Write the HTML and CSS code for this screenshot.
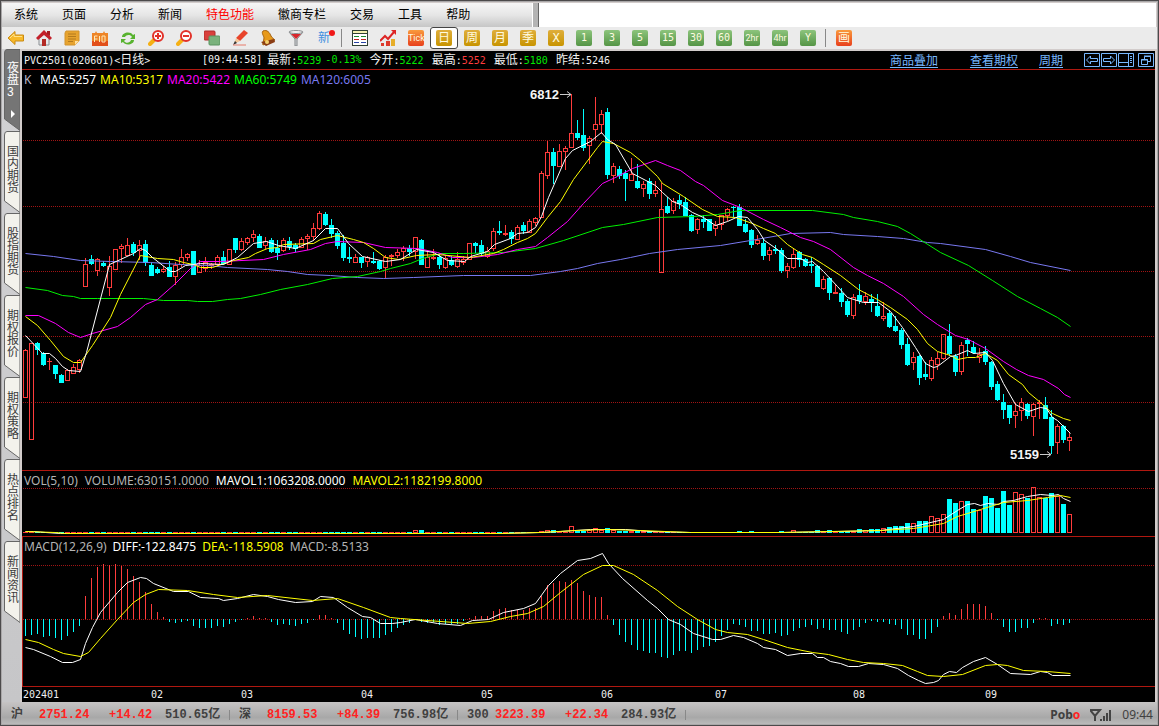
FILE: index.html
```html
<!DOCTYPE html>
<html lang="zh-CN">
<head>
<meta charset="utf-8">
<title>PVC2501 日线</title>
<link rel="stylesheet" href="styles.css">
</head>
<body>
<div class="window">
  <div class="menubar">
    <nav class="menu">
      <button>系统</button><button>页面</button><button>分析</button><button>新闻</button><button class="hot">特色功能</button><button>徽商专栏</button><button>交易</button><button>工具</button><button>帮助</button>
    </nav>
    <div class="menu-grip"></div>
    <div class="menu-blank"></div>
  </div>

  <div class="toolbar">
    <button aria-label="后退"><svg viewBox="0 0 16 16"><path d="M0 8 7 1.500V5h8.500v6H7v3.500z" fill="#f7b92a" stroke="#c98a12"/><path d="M2 8 6 4v2.500h8" fill="none" stroke="#ffe28a"/></svg></button>
    <button aria-label="首页"><svg viewBox="0 0 16 16"><path d="M3 8v7h10V8L8 4z" fill="#e8eaec" stroke="#8b8f93"/><path d="M0 8 8 0l8 8-2 2-6-5-6 5z" fill="#c3202a"/><path d="M11 1h3v5l-3-2z" fill="#a51c22"/><path d="M6 9h4v7H6z" fill="#b32a25"/></svg></button>
    <button aria-label="公告"><svg viewBox="0 0 16 16"><path d="M2 1h13v10l-4 4H1V3z" fill="#e7a32e" stroke="#d2932c"/><path d="M4 4h8M4 6.500h8M4 9h8M4 11.500h5" stroke="#b37a1e"/><path d="M15 11h-4v4z" fill="#ffe0a0"/></svg></button>
    <button aria-label="F10"><svg viewBox="0 0 16 16"><path d="M0 3h3l1-2 1 2h6l1-2 1 2h3v13H0z" fill="#ee8426"/><path d="M0 11h16v5H0z" fill="#e2501a"/><path d="M2.500 12V6h3M3 9h2.500M7.500 6v6M10 6h3v6h-3z" fill="none" stroke="#ffe9b8"/></svg></button>
    <button aria-label="刷新"><svg viewBox="0 0 16 16"><path d="M2 7c0-5 9-6 11-2l2-1v5h-5l2-2c-2-3-6-2-7 0zM14 10c0 5-9 6-11 2l-2 1V9h5l-2 2c2 3 6 2 7-1z" fill="#58b32f"/></svg></button>
    <button aria-label="放大"><svg viewBox="0 0 16 16"><path d="M6 10 2 14" stroke="#f5b014" stroke-width="4" stroke-linecap="round"/><circle cx="10" cy="6" r="5" fill="#fff" stroke="#e2322a" stroke-width="2"/><path d="M7 6h6M10 3v6" stroke="#e2322a" stroke-width="2"/></svg></button>
    <button aria-label="缩小"><svg viewBox="0 0 16 16"><path d="M6 10 2 14" stroke="#f5b014" stroke-width="4" stroke-linecap="round"/><circle cx="10" cy="6" r="5" fill="#fff" stroke="#e2322a" stroke-width="2"/><path d="M7 6h6" stroke="#e2322a" stroke-width="2"/></svg></button>
    <button aria-label="叠加"><svg viewBox="0 0 16 16"><rect x="0" y="1" width="11" height="9" rx="1" fill="#d9413c" stroke="#b02c2a"/><rect x="5" y="6" width="11" height="9" rx="1" fill="#7ab27c" stroke="#5a9460"/></svg></button>
    <button aria-label="画笔"><svg viewBox="0 0 16 16"><path d="m4 8 8-8 4 3-8 8z" fill="#e8442b"/><path d="m4 8 4 3-6 3z" fill="#f5c698"/><path d="m1 15 2-4 2 2z" fill="#333"/><path d="M1 15h13" stroke="#e77a6b"/></svg></button>
    <button aria-label="预警"><svg viewBox="0 0 16 16"><path d="M3 1C7-1 10 3 11 6c1 2 3 3 4 4L3 15c-1-2 1-4 1-7 0-2-3-5-1-7z" fill="#e79a1c" stroke="#a3600f"/><path d="M1 12 14 9l1 3-9 4z" fill="#8a3c14"/><circle cx="7" cy="12" r="2" fill="#f6d16d"/></svg></button>
    <button aria-label="筛选"><svg viewBox="0 0 16 16"><path d="M1 2h14L9 9v7H7V9z" fill="#d8dadc" stroke="#808487"/><path d="M3 4h10L8 9z" fill="#d8272d"/><ellipse cx="8" cy="2" rx="7" ry="1.500" fill="#f2f2f2" stroke="#8c8f92"/></svg></button>
    <button class="new-button">新<i class="badge"></i></button>
    <span class="separator"></span>
    <button aria-label="报价表"><svg viewBox="0 0 16 16" shape-rendering="crispEdges"><path d="M0 0h16v16H0z" fill="#2f4034"/><path d="M1 4h14v11H1z" fill="#fff"/><path d="M1 1h14v2H1z" fill="#f3efb0"/><path d="M2 6.500h5M9 6.500h5" stroke="#1a8a2a"/><path d="M2 9.500h5M9 9.500h5" stroke="#c32020"/><path d="M2 12.500h5M9 12.500h5" stroke="#2743a5"/></svg></button>
    <button aria-label="走势图"><svg viewBox="0 0 16 16"><path d="M1 13h3v3H1zM6 11h4v5H6z" fill="#dd3a2c"/><path d="M11 9h4v7h-4z" fill="#e7ae2a"/><path d="m0 11 5-5 3 3 6-7" fill="none" stroke="#dd2525" stroke-width="2"/><path d="M11 0h5v5z" fill="#dd2525"/></svg></button>
    <button><span class="tile orange small">Tick</span></button>
    <button class="selected"><span class="tile gold">日</span></button>
    <button><span class="tile gold">周</span></button>
    <button><span class="tile gold">月</span></button>
    <button><span class="tile gold">季</span></button>
    <button><span class="tile gold">X</span></button>
    <button><span class="tile green">1</span></button>
    <button><span class="tile green">3</span></button>
    <button><span class="tile green">5</span></button>
    <button><span class="tile green">15</span></button>
    <button><span class="tile green">30</span></button>
    <button><span class="tile green">60</span></button>
    <button><span class="tile green small">2hr</span></button>
    <button><span class="tile green small">4hr</span></button>
    <button><span class="tile green">Y</span></button>
    <span class="separator"></span>
    <button><span class="tile orange">画</span></button>
  </div>

  <main class="workspace">
    <aside class="tabs">
      <button class="tab active"><svg viewBox="0 0 16 82"><path d="M.5 70V4Q.5.500 3 .500H16V81.500z"/><path class="arrow" d="M7 61v8l4-4z"/></svg><span>夜盘<br>3</span></button>
      <button class="tab"><svg viewBox="0 0 16 82"><path d="M.5 70V4Q.5.500 3 .500H16V81.500z"/></svg><span>国内期货</span></button>
      <button class="tab"><svg viewBox="0 0 16 82"><path d="M.5 70V4Q.5.500 3 .500H16V81.500z"/></svg><span>股指期货</span></button>
      <button class="tab"><svg viewBox="0 0 16 82"><path d="M.5 70V4Q.5.500 3 .500H16V81.500z"/></svg><span>期权报价</span></button>
      <button class="tab"><svg viewBox="0 0 16 82"><path d="M.5 70V4Q.5.500 3 .500H16V81.500z"/></svg><span>期权策略</span></button>
      <button class="tab"><svg viewBox="0 0 16 82"><path d="M.5 70V4Q.5.500 3 .500H16V81.500z"/></svg><span>热点排名</span></button>
      <button class="tab"><svg viewBox="0 0 16 82"><path d="M.5 70V4Q.5.500 3 .500H16V81.500z"/></svg><span>新闻资讯</span></button>
    </aside>

    <section class="chart">
      <header class="quote">
        <h1>PVC2501(020601)&lt;<b>日线</b>&gt;</h1>
        <span class="clock">[09:44:58]</span>
        <span><b>最新</b>:<em class="down">5239</em></span>
        <em class="down change">-0.13%</em>
        <span><b>今开</b>:<em class="down">5222</em></span>
        <span><b>最高</b>:<em class="up">5252</em></span>
        <span><b>最低</b>:<em class="down">5180</em></span>
        <span><b>昨结</b>:5246</span>
        <nav class="links"><a href="#">商品叠加</a><a href="#">查看期权</a><a href="#">周期</a></nav>
        <div class="layout-buttons">
          <button aria-label="向左"><svg viewBox="0 0 16 14"><path d="M.5.500h15v13H.5zM2.500 7l4-4v2.500h7v3h-7V11z"/></svg></button>
          <button aria-label="向右"><svg viewBox="0 0 16 14"><path d="M.5.500h15v13H.5zM13.500 7l-4-4v2.500h-7v3h7V11z"/></svg></button>
          <button aria-label="侧栏"><svg viewBox="0 0 16 14"><path d="M.5.500h15v13H.5zM.5 9.500h10M10.500.500v13M12 3.500h2M12 5.500h2M12 7.500h2M12 9.500h2"/></svg></button>
          <button aria-label="还原" class="restore"><svg viewBox="0 0 16 14"><path d="M.5.500h15v13H.5zM6.500 6V3.500h6v5H10M6 3h7M3.500 6.500h6v5h-6zM3 7h7"/></svg></button>
        </div>
      </header>

      <div class="panel price">
        <p class="legend"><span class="k">K</span><span class="white">MA5:5257</span><span class="yellow">MA10:5317</span><span class="magenta">MA20:5422</span><span class="lime">MA60:5749</span><span class="violet">MA120:6005</span></p>
        <svg id="price"></svg>
      </div>
      <div class="panel volume">
        <p class="legend"><span class="grey">VOL(5,10)</span><span class="grey">VOLUME:630151.0000</span><span class="white">MAVOL1:1063208.0000</span><span class="yellow">MAVOL2:1182199.8000</span></p>
        <svg id="volume"></svg>
      </div>
      <div class="panel macd">
        <p class="legend"><span class="grey">MACD(12,26,9)</span><span class="white">DIFF:-122.8475</span><span class="yellow">DEA:-118.5908</span><span class="grey">MACD:-8.5133</span></p>
        <svg id="macd"></svg>
      </div>
      <div class="panel axis"><svg id="axis"></svg></div>
    </section>
  </main>

  <footer class="status">
    <div class="index"><span>沪</span><span class="up">2751.24</span><span class="up">+14.42</span><span>510.65亿</span></div>
    <div class="index"><span>深</span><span class="up">8159.53</span><span class="up">+84.39</span><span>756.98亿</span></div>
    <div class="index"><span>300</span><span class="up">3223.39</span><span class="up">+22.34</span><span>284.93亿</span></div>
    <strong class="brand">Pob<span class="up">o</span></strong>
    <svg class="signal" viewBox="0 0 22 12"><path d="M0 1h10L5 7zM5 5v7" fill="none" stroke="#444" stroke-width="2"/><path d="M10 10h2v2h-2zM13 7h2v5h-2zM16 4h2v8h-2zM19 1h2v11h-2z" fill="#444"/></svg>
    <time>09:44</time>
  </footer>
</div>
<script src="chart.js"></script>
</body>
</html>
```

FILE: styles.css
```css
* { box-sizing: border-box; }
body { margin: 0; background: #000; font: 12px/16px "Liberation Sans", "Noto Sans CJK SC", sans-serif; }
button { margin: 0; padding: 0; border: 0; background: none; color: inherit; font: inherit; }
b, em, i { font-weight: normal; font-style: normal; }
svg { display: block; }

.window {
  display: flex; flex-direction: column; min-height: 100vh;
  border: 1px solid #4c4a4b; box-shadow: inset 0 0 0 1px #a9a7a8;
  background: #d2cccb; padding: 2px 1px 1px;
}

.menubar { display: flex; height: 24px; padding-right: 1px; flex: none; }
.menu { display: flex; gap: 24px; width: 530px; padding: 0 12px; background: linear-gradient(#f6f6f6, #e6e6e6 50%, #c6c6c6); }
.menu button { color: #000; line-height: 24px; white-space: nowrap; }
.menu .hot { color: #f00; }
.menu-grip { width: 7px; background: #b4b4b4; border-left: 1px solid #fff; border-right: 1px solid #666; }
.menu-blank { flex: 1; background: #fff; }

.toolbar { display: flex; height: 22px; flex: none; background: #ebebeb; }
.toolbar button { display: grid; place-items: center; width: 28px; height: 22px; }
.toolbar svg { width: 16px; height: 16px; }
.toolbar .selected { background: #fff; border: 1px solid #444; border-radius: 3px; }
.separator { width: 8px; margin: 2px 0; background: linear-gradient(#888, #888) 3px 0 / 1px 100% no-repeat; }
.new-button { position: relative; color: #3f8fe0; }
.badge { position: absolute; top: 3px; right: 3px; width: 6px; height: 6px; border-radius: 50%; background: #f01818; }
.tile { display: block; width: 16px; height: 16px; border-radius: 2px; color: #fffbe0; font: 10px/16px "DejaVu Sans Mono", "Noto Sans CJK SC", monospace; text-align: center; white-space: nowrap; }
.tile.small { font: 9px/16px Roboto, sans-serif; }
.gold { background: linear-gradient(#dfae3c, #c89400); font-size: 12px; }
.green { background: linear-gradient(#8cc47c, #559546); }
.orange { background: linear-gradient(#f99a3c, #e8401c); font-size: 12px; }

.workspace { display: flex; flex: 1; padding-right: 2px; }
.tabs { width: 20px; padding-left: 2px; flex: none; background: linear-gradient(#d2d2d4, #c6c6c8); border-right: 2px solid #d2cccb; }
.tab { display: block; position: relative; width: 16px; height: 82px; padding: 15px 0 0 3px; color: #3c3c3c; text-align: left; vertical-align: top; }
.tab svg { position: absolute; top: 0; left: 0; width: 16px; height: 82px; fill: #f3f2ec; stroke: #666; }
.tab span { display: block; position: relative; width: 12px; font-size: 12px; line-height: 12px; word-break: break-all; height: 67px; }
.tab.active { color: #fff; padding-top: 10px; }
.tab.active svg { fill: #757575; }
.tab .arrow { fill: #fff; stroke: none; }

.chart { flex: 1; min-width: 0; display: flex; flex-direction: column; margin-top: 2px; background: #000; color: #f0f0f0; }
.quote { display: flex; align-items: center; gap: 8px; height: 19px; padding: 0 1px 0 2px; border-bottom: 1px solid #b01810; font: 10px/18px "DejaVu Sans Mono", monospace; white-space: nowrap; flex: none; }
.quote b { font: 12px/18px "Noto Sans CJK SC", sans-serif; }
.quote h1 { margin: 0; width: 170px; font: inherit; }
.quote .clock { margin-right: -3px; }
.quote .change { margin-left: -4px; }
.down { color: #00e800; }
.quote .up { color: #ff3c3c; }
.links { display: flex; margin-left: auto; font: 12px/16px "Noto Sans CJK SC", sans-serif; }
.links a { color: #78b8ff; margin-right: 32px; text-underline-offset: 2px; }
.links a:nth-child(2) { margin-right: 21px; }
.links a:last-child { margin-right: 13px; }
.layout-buttons { display: flex; gap: 1px; }
.layout-buttons svg { width: 16px; height: 14px; fill: none; stroke: #78b8ff; }
.layout-buttons .restore { margin-left: 3px; }

.panel { position: relative; border-bottom: 1px solid #b01810; }
.panel svg { width: 100%; height: 100%; }
.price { flex: 1; min-height: 401px; }
.price > svg { position: absolute; inset: 0; }
.volume { height: 66px; }
.macd { height: 150px; box-shadow: inset 1px 0 #b01810; }
.axis { height: 15px; border: 0; }
.legend { position: absolute; top: 2px; left: 2px; display: flex; gap: 4px; margin: 0; font: 12px/16px "Noto Sans", sans-serif; white-space: nowrap; }
.volume .legend { gap: 7px; }
.macd .legend { gap: 6px; }
.k { width: 12px; color: #b8b8c8; }
.grey { color: #b4b4b4; }
.white { color: #fff; }
.yellow { color: #ff0; }
.magenta { color: #f0f; }
.lime { color: #0f0; }
.violet { color: #7878f0; }

.chart line, .chart rect { shape-rendering: crispEdges; }
.grid-line { stroke: #a01414; stroke-dasharray: 1 1; }
.rise { fill: none; stroke: #ff3c3c; }
.rise-fill { fill: #ff3c3c; }
.fall-fill { fill: #0ff; }
.curve { fill: none; stroke-width: 1; }
.callout { fill: #f4f4f4; font: bold 13px "Liberation Sans", sans-serif; }
.pointer { fill: none; stroke: #ccc; }
.month { fill: #f0f0f0; font: 10px "DejaVu Sans Mono", monospace; }

.status { display: flex; align-items: center; height: 22px; flex: none; padding: 3px 4px 0 9px; background: linear-gradient(#c6c4c4, #a8a8a8 70%, #bababa); color: #404040; font: bold 12px/18px "Liberation Mono", "Noto Sans CJK SC", monospace; white-space: nowrap; }
.index { display: grid; grid-template-columns: 28px 70px 56px 74px; background: linear-gradient(#888, #888) 218px 4px / 1px 10px no-repeat; }
.status .up { color: #f22; }
.brand { margin-left: auto; font: bold 12px/18px "Noto Sans", sans-serif; }
.signal { width: 22px; height: 12px; margin: 0 10px; }
.status time { font: 12px/18px "Noto Sans", sans-serif; }
```

FILE: chart.js
```js
const NS = 'http://www.w3.org/2000/svg';
const LEFT = 22, FIRST = 25, STEP = 6;

/* kind (r = rise, c = fall), high, body top, body bottom, low */
const candles = `r349,350,398,398 r343,343,440,440 c342,343,350,355 c352,353,365,366 r358,361,362,370 c365,365,374,379 c374,375,383,383 r369,370,381,381 r364,367,374,374 r359,360,370,373
r258,264,287,287 c255,259,264,265 r258,259,271,276 c261,263,266,267 r256,266,288,296 r249,249,270,270 r244,246,249,263 r238,245,256,256 c242,244,253,256 r240,245,251,260
c240,244,263,266 c263,265,276,276 c267,269,273,274 r266,269,272,273 c261,267,277,277 r262,265,277,285 r249,257,265,267 r253,254,258,261 c251,251,275,275 r260,265,273,273
r257,262,269,272 r263,264,266,269 r255,257,265,267 c251,257,264,265 r249,249,265,265 c238,238,250,253 r238,241,250,251 r237,238,243,245 r230,234,238,242 c234,236,248,248
r237,241,246,249 c238,240,252,253 c240,248,253,260 r238,240,251,252 c237,241,247,250 c243,245,249,252 r237,239,248,248 r234,236,239,250 r223,228,237,241 r211,213,229,230
c212,214,225,226 c219,225,234,238 c231,233,246,249 c235,243,258,261 c247,257,259,263 r254,257,263,263 c257,257,263,268 r256,257,262,267 c252,261,263,264 c260,261,269,270
r255,257,268,278 r254,255,257,266 r249,252,256,258 r246,248,252,261 c245,248,252,256 r237,237,252,259 c239,240,265,265 r252,257,268,268 r249,257,259,260 c253,257,265,269
r255,258,268,269 c256,260,265,266 r252,259,267,268 r256,259,263,265 r243,243,260,260 c242,243,246,253 c240,245,254,256 r247,251,257,258 r228,231,249,251 c221,231,233,235
r225,233,235,236 c230,232,239,244 r225,227,240,240 c222,225,231,234 r219,221,233,233 r217,218,223,226 r171,173,218,218 r141,152,176,179 c148,152,166,184 r144,151,167,167
r146,148,152,170 r94,133,148,148 c120,133,138,140 c109,135,148,151 r136,138,146,164 r97,124,130,141 r110,114,125,134 c108,112,175,179 r163,166,176,183 c166,169,176,179
c170,173,179,201 r158,174,181,181 c164,181,188,189 r181,184,189,197 c178,181,194,199 r181,190,194,197 r183,209,273,273 c197,206,213,214 r198,201,211,214 c195,200,204,209
c197,202,216,216 c214,215,231,232 r218,219,230,234 c215,219,222,228 c219,219,231,231 r221,225,229,236 r215,215,225,230 r208,209,216,221 c206,207,208,217 c204,207,226,226
c219,224,232,233 c229,230,245,248 r235,240,244,245 c239,243,256,260 r247,250,255,261 c245,249,251,254 c248,250,271,273 r263,266,271,278 r248,254,268,269 c251,252,260,267
c258,259,266,267 c257,264,266,273 c265,266,287,287 r276,279,289,290 c277,278,293,300 r285,292,294,294 c288,293,302,307 c299,301,315,317 r294,297,316,319 c284,295,301,304
r292,296,302,305 c294,299,302,312 c294,306,316,317 r302,316,319,321 c310,313,327,328 c316,326,331,332 c328,330,345,349 c338,344,365,366 r352,357,363,370 c355,356,378,385
c362,374,377,380 r357,360,379,381 r352,358,365,370 r334,334,359,360 c324,336,354,356 c354,356,372,376 r342,345,372,375 c338,340,344,356 c341,347,353,354 r348,354,358,363
c346,351,362,365 c361,362,387,390 c381,384,400,401 c394,402,410,419 c405,405,418,424 r403,411,416,428 r398,402,411,421 c403,404,416,419 r403,404,417,436 r400,402,404,419
c397,405,419,419 c410,417,446,454 r424,426,443,454 c425,426,440,443 r432,437,441,451`.split(/\s+/).map(s => [s[0], ...s.slice(1).split(',').map(Number)]);

const averages = {
  '#7878f0': '25,253 53,256 80,260 110,261 150,262 180,264 207,265 227,267 267,269 287,271 307,274 330,275 357,277 383,278 413,277 463,275 530,275 560,271 577,268 597,263 620,259 630,257 649,253 677,249 720,245 750,240 790,233 830,232 843,234 877,236 903,238 927,242 940,243 985,249 1010,256 1030,262 1070,270',
  '#00f000': '25,287 47,290 62,295 73,296 80,298 97,298 143,298 163,300 187,300 197,301 212,301 227,299 240,298 260,294 280,289 307,284 332,278 357,276 380,271 390,268 410,263 422,258 440,253 463,253 503,252 535,248 563,240 602,227 623,224 657,217 693,216 717,214 740,210 812,210 843,214 853,217 877,221 897,226 910,233 940,252 968,265 992,280 1017,296 1040,308 1057,317 1070,326',
  '#f0f': '25,315 38,315 55,323 68,332 80,337 92,333 117,326 130,317 145,304 157,299 175,283 190,268 200,261 220,261 263,259 283,254 310,249 325,243 337,241 363,242 385,247 417,248 437,252 452,257 473,257 497,254 517,249 535,246 547,237 567,221 583,203 602,183 617,176 632,168 655,160 667,165 680,170 695,181 703,185 722,200 740,207 763,219 780,227 800,237 813,241 830,249 853,267 867,275 883,283 903,296 923,314 937,324 955,335 968,339 985,348 1003,361 1016,369 1028,375 1043,379 1058,388 1064,394 1070,397',
  '#ff0': '25,316 37,325 50,340 63,356 73,362 80,362 92,345 110,317 120,294 140,255 157,258 173,259 183,262 193,264 200,267 212,267 233,260 248,257 255,253 267,248 277,247 283,244 313,243 320,239 337,235 353,239 363,242 373,248 385,257 398,259 416,255 437,254 470,257 493,253 503,249 517,242 527,238 535,233 547,217 560,201 573,179 597,147 602,141 613,143 630,152 640,160 657,176 662,183 683,196 702,209 717,216 735,217 752,223 763,228 775,233 787,244 802,254 812,257 823,264 840,275 858,289 877,299 890,307 907,319 917,329 927,343 937,351 950,355 957,359 967,357 975,357 985,353 997,360 1008,374 1022,384 1028,392 1040,402 1052,413 1063,418 1070,420',
  '#fff': '25,335 42,353 49,353 55,358 62,366 68,370 80,371 86,352 109,264 120,259 133,253 140,248 145,250 152,257 170,271 175,271 185,265 200,263 223,264 237,257 253,243 266,241 278,245 295,248 313,240 325,228 337,228 348,243 362,256 385,261 400,259 416,249 433,252 447,260 464,261 470,256 487,251 494,244 510,238 517,233 527,232 535,227 541,216 548,197 565,158 572,150 590,141 601,132 607,139 615,144 632,173 655,185 662,192 672,201 680,204 692,212 703,217 715,225 727,221 738,216 747,217 757,229 764,240 777,249 787,258 800,258 807,262 812,261 823,271 837,286 847,297 863,302 878,302 890,311 902,327 915,347 925,363 933,367 937,366 950,356 955,355 967,350 973,353 985,352 992,360 1003,383 1015,404 1028,411 1040,407 1046,408 1052,417 1057,420 1063,426 1070,433'
};

/* bar heights, one pixel unless listed */
const tallVolumes = { 65: 3, 66: 3, 86: 2, 87: 3, 88: 3, 91: 7, 92: 2, 93: 2, 94: 3, 95: 5, 96: 3, 97: 5, 98: 3, 99: 2, 100: 2, 101: 2, 102: 2, 103: 2, 104: 2, 119: 2, 121: 2, 126: 2, 128: 3, 132: 3, 134: 3, 137: 2, 138: 2, 139: 4, 140: 3, 141: 4, 142: 4, 143: 5, 144: 6, 145: 7, 146: 7, 147: 10, 148: 10, 149: 12, 150: 12 };
[17, 15, 19, 34, 30, 32, 32, 24, 23, 37, 35, 25, 42, 28, 41, 39, 35, 46, 36, 35, 40, 37, 29, 19].forEach((h, n) => { tallVolumes[151 + n] = h; });

const volumeAverages = {
  '#fff': '25,531 33,531 45,532 60,533 500,533 540,532 560,531 590,529 625,529 650,531 690,532 780,532 837,531 880,530 913,526 943,519 957,510 967,504 974,503 980,505 987,503 998,504 1003,501 1013,500 1027,496 1040,494 1052,495 1058,494 1063,498 1070,501',
  '#ff0': '25,531 55,532 65,533 400,533 500,533 540,532 575,530 605,529 640,530 690,532 780,532 880,530 913,528 943,523 957,516 967,513 980,509 993,505 1003,502 1027,500 1047,497 1060,495 1070,497'
};

/* end of each histogram bar; the zero line is at 619 */
const histogram = [636,635,634,637,636,638,640,636,632,626,596,578,567,564,565,564,566,569,576,582,592,604,612,617,622,623,622,621,626,628,628,628,626,627,624,622,620,618,616,618,618,622,625,624,625,626,624,623,620,615,615,618,623,630,634,637,639,638,638,638,635,632,628,625,623,620,622,623,622,625,624,624,624,621,618,616,616,616,611,609,608,610,610,610,608,608,596,585,583,581,582,580,583,591,595,597,597,615,625,635,642,645,650,651,653,653,657,658,655,651,651,653,650,647,646,642,636,630,624,625,627,631,631,634,634,633,636,635,631,628,627,625,629,628,630,630,632,634,630,627,623,621,622,622,624,625,629,635,635,639,639,633,627,616,613,615,609,604,604,604,606,613,620,627,632,632,628,628,623,618,618,626,624,625,623];

const macdLines = {
  '#fff': '25,647 33,649 50,656 62,662 72,662 80,659 85,643 92,627 100,612 117,592 127,582 140,577 146,578 153,583 173,591 188,591 200,597 218,598 223,600 237,598 253,594 267,596 278,599 295,602 312,601 320,596 333,597 347,607 362,616 370,617 380,623 392,623 400,622 415,619 437,623 460,625 472,620 488,619 503,612 523,608 535,603 548,585 560,573 577,560 590,558 602,553 608,563 622,578 647,600 657,608 668,619 680,624 693,633 712,639 720,639 733,635 743,637 757,643 763,647 775,649 787,655 800,653 812,653 817,657 823,657 830,661 840,663 848,666 858,666 868,663 883,664 897,668 908,675 918,680 925,683 933,682 938,680 943,674 949,671 956,672 962,667 973,661 985,657 997,664 1010,673 1030,674 1040,671 1047,672 1052,675 1070,675',
  '#ff0': '25,639 38,642 53,649 63,653 80,656 88,652 100,638 117,619 133,602 145,594 158,589 187,590 213,594 237,597 267,595 312,600 337,598 363,607 390,617 400,618 427,620 467,623 490,621 510,616 527,613 543,606 560,592 583,574 602,565 613,565 633,574 657,590 677,606 697,619 715,629 727,632 747,634 763,639 787,647 812,652 828,654 847,659 863,662 883,663 902,665 917,671 927,675 943,676 962,674 985,665 997,664 1007,665 1023,670 1047,671 1070,673'
};

function add(parent, name, attrs, text) {
  const node = document.createElementNS(NS, name);
  for (const key in attrs) node.setAttribute(key, attrs[key]);
  if (text) node.textContent = text;
  parent.appendChild(node);
  return node;
}
function panel(id, top, gridLines) {
  const svg = document.getElementById(id);
  for (const y of gridLines) add(svg, 'line', { x1: 1, x2: '100%', y1: y - top + 0.5, y2: y - top + 0.5, class: 'grid-line' });
  return add(svg, 'g', { transform: `translate(${-LEFT},${-top})` });
}
function bar(group, kind, x, top, bottom) {
  if (kind === 'r' && bottom - top > 2) add(group, 'rect', { x: x - 1.5, y: top + 0.5, width: 4, height: bottom - top - 1, class: 'rise' });
  else add(group, 'rect', { x: x - 2, y: top, width: 5, height: Math.max(1, bottom - top), class: kind === 'r' ? 'rise-fill' : 'fall-fill' });
}
function stem(group, kind, x, top, bottom) {
  if (bottom > top) add(group, 'rect', { x, y: top, width: 1, height: bottom - top, class: kind === 'r' ? 'rise-fill' : 'fall-fill' });
}
function curves(group, set) {
  const layer = add(group, 'g', { transform: 'translate(0.5,0.5)' });
  for (const color in set) add(layer, 'polyline', { points: set[color], stroke: color, class: 'curve' });
}

const price = panel('price', 70, [140, 206, 271, 336, 402]);
const volume = panel('volume', 471, [488]);
const macd = panel('macd', 537, [565, 619]);
candles.forEach(([kind, high, top, bottom, low], i) => {
  const x = FIRST + i * STEP;
  stem(price, kind, x, high, top);
  stem(price, kind, x, bottom, low);
  bar(price, kind, x, top, bottom);
  bar(volume, kind, x, 533 - (tallVolumes[i] || 1), 533);
  const end = histogram[i];
  stem(macd, end < 619 ? 'r' : 'c', x, Math.min(619, end), Math.max(619, end));
});
curves(price, averages);
curves(volume, volumeAverages);
curves(macd, macdLines);
add(price, 'text', { x: 530, y: 99, class: 'callout' }, '6812');
add(price, 'path', { d: 'M560 94.5h11m-4-3 4 3-4 3', class: 'pointer' });
add(price, 'text', { x: 1010, y: 459, class: 'callout' }, '5159');
add(price, 'path', { d: 'M1040 454.5h11m-4-3 4 3-4 3', class: 'pointer' });

const axis = panel('axis', 687, []);
[[23, '202401'], [151, '02'], [241, '03'], [361, '04'], [481, '05'], [601, '06'], [715, '07'], [853, '08'], [985, '09']]
  .forEach(([x, label]) => add(axis, 'text', { x, y: 698, class: 'month' }, label));
```
